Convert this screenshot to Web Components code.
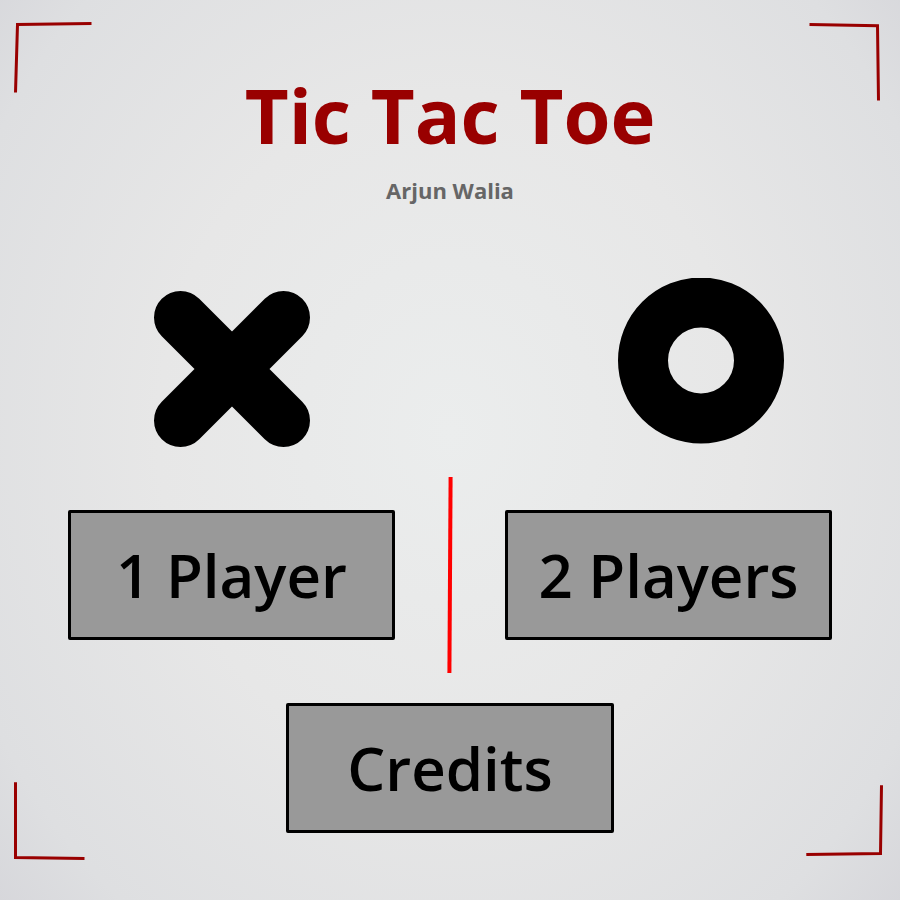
<!DOCTYPE html>
<html lang="en">
<head>
<meta charset="utf-8">
<meta name="viewport" content="width=device-width, initial-scale=1">
<title>Tic Tac Toe</title>
<style>
  body {
    margin: 0;
    font-family: "Open Sans", "Noto Sans", sans-serif;
    color: #000;
  }
</style>
</head>
<body>
<title-screen>
  <game-heading slot="heading" author="Arjun Walia">Tic Tac Toe</game-heading>
  <cross-mark slot="cross"></cross-mark>
  <nought-mark slot="nought"></nought-mark>
  <menu-button slot="one">1 Player</menu-button>
  <center-line slot="divider"></center-line>
  <menu-button slot="two">2 Players</menu-button>
  <menu-button slot="credits">Credits</menu-button>
</title-screen>

<script>
  function define(name, html, setup) {
    const template = document.createElement('template');
    template.innerHTML = html;
    customElements.define(name, class extends HTMLElement {
      constructor() {
        super();
        this.attachShadow({ mode: 'open' }).append(template.content.cloneNode(true));
      }
      connectedCallback() {
        if (setup) setup(this);
      }
    });
  }

  define('corner-frame', `
    <style>
      :host {
        position: absolute;
        inset: 0;
        display: grid;
        grid-template-columns: auto auto;
        justify-content: space-between;
        align-content: space-between;
        pointer-events: none;
      }
      svg { display: block; width: 100px; height: 120px; fill: none; stroke: #990000; stroke-width: 3; }
    </style>
    <svg viewBox="0 0 100 120" aria-hidden="true"><path d="M15.5 92.5 L17.5 24.5 L91.5 23.5"/></svg>
    <svg viewBox="0 0 100 120" aria-hidden="true"><path d="M9.5 24.5 L77.5 25.7 L78.5 100.5"/></svg>
    <svg viewBox="0 0 100 120" aria-hidden="true"><path d="M15.5 2.3 L15.5 77.5 L84.5 78.5"/></svg>
    <svg viewBox="0 0 100 120" aria-hidden="true"><path d="M81.5 5.3 L80.5 73.5 L6.3 74.5"/></svg>`);

  define('game-heading', `
    <style>
      :host { display: block; text-align: center; }
      h1 { margin: 0; font-size: 76px; line-height: 82px; font-weight: 700; color: #990000; }
      p { margin: 18px 0 0; font-size: 22px; line-height: 32px; font-weight: 700; color: #666; }
    </style>
    <h1><slot></slot></h1>
    <p></p>`, host => {
      host.shadowRoot.querySelector('p').textContent = host.getAttribute('author');
    });

  define('cross-mark', `
    <style>
      :host { display: block; }
      svg { display: block; width: 156px; height: 156px; }
    </style>
    <svg viewBox="0 0 156 156" role="img" aria-label="Cross">
      <path d="M26.5 26.5 L129.5 129.5 M129.5 26.5 L26.5 129.5" stroke="#000" stroke-width="53" stroke-linecap="round"/>
    </svg>`);

  define('nought-mark', `
    <style>
      :host { display: block; }
      svg { display: block; width: 166px; height: 166px; }
    </style>
    <svg viewBox="0 0 166 166" role="img" aria-label="Nought">
      <circle cx="83" cy="82.5" r="58" fill="none" stroke="#000" stroke-width="50"/>
    </svg>`);

  define('center-line', `
    <style>
      :host { display: block; }
      svg { display: block; width: 8px; height: 196px; }
    </style>
    <svg viewBox="0 0 8 196" aria-hidden="true">
      <path d="M4.6 0 L3.4 196" stroke="#ff0000" stroke-width="4"/>
    </svg>`);

  define('menu-button', `
    <style>
      :host { display: block; }
      button {
        display: block;
        box-sizing: border-box;
        width: 100%;
        margin: 0;
        padding: 21px 8px;
        border: 3px solid #000;
        border-radius: 2px;
        background: #999;
        color: inherit;
        font: inherit;
        font-size: 60px;
        line-height: 82px;
        font-weight: 600;
        white-space: nowrap;
        cursor: pointer;
      }
    </style>
    <button type="button"><slot></slot></button>`);

  define('title-screen', `
    <style>
      :host {
        position: relative;
        display: block;
        box-sizing: border-box;
        min-height: 100vh;
        padding: 74px 68px 64px;
        background: radial-gradient(ellipse 72% 84% at 50% 48%, #ebeded 0%, #e7e7e7 45%, #dedfe1 80%, #d3d3d8 100%);
      }
      main { position: relative; }
      .board {
        display: grid;
        grid-template-columns: 1fr 110px 1fr;
        align-items: center;
        justify-items: center;
        margin-top: 72px;
        row-gap: 30px;
      }
      .cross { grid-column: 1; align-self: end; }
      .nought { grid-column: 3; justify-self: end; align-self: start; padding: 0 48px 3px 0; }
      .choice { width: 100%; }
      .credits { grid-column: 1 / -1; width: 43%; }
    </style>
    <corner-frame></corner-frame>
    <main>
      <slot name="heading"></slot>
      <div class="board">
        <div class="cross"><slot name="cross"></slot></div>
        <div class="nought"><slot name="nought"></slot></div>
        <div class="choice"><slot name="one"></slot></div>
        <slot name="divider"></slot>
        <div class="choice"><slot name="two"></slot></div>
        <div class="credits"><slot name="credits"></slot></div>
      </div>
    </main>`);
</script>
</body>
</html>
